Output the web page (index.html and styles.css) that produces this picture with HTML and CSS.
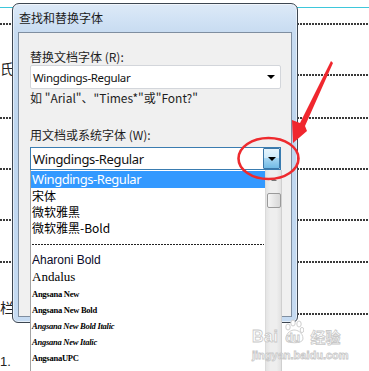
FILE: index.html
```html
<!DOCTYPE html>
<html lang="zh-CN">
<head>
<meta charset="utf-8">
<title>查找和替换字体</title>
<link rel="stylesheet" href="styles.css">
</head>
<body>
<div class="screen">
  <div class="doc">
    <div class="cyan"></div>
    <div class="row r1"><span class="leader"></span></div>
    <div class="row r2"><span class="frag">氏</span><span class="leader"></span></div>
    <div class="row r3"><span class="leader"></span></div>
    <div class="row r4"><span class="leader"></span></div>
    <div class="row r5"><span class="leader"></span></div>
    <div class="row r6"><span class="leader"></span></div>
    <div class="row r7"><span class="frag">栏</span><span class="leader"></span></div>
    <div class="row r8"><span class="frag num">1.</span></div>
  </div>

  <div class="dialog">
    <div class="titlebar">查找和替换字体</div>
    <div class="client">
      <div class="label">替换文档字体 (R):</div>
      <div class="input">
        <span class="value">Wingdings-Regular</span>
        <span class="caret"></span>
      </div>
      <div class="hint">如 "Arial"、"Times*"或"Font?"</div>
      <div class="label label2">用文档或系统字体 (W):</div>
      <div class="combo">
        <span class="value big">Wingdings-Regular</span>
        <span class="combo-btn"><span class="caret"></span></span>
      </div>
    </div>
  </div>

  <div class="dropdown">
    <ul class="list">
      <li class="item sel">Wingdings-Regular</li>
      <li class="item cjk">宋体</li>
      <li class="item cjk">微软雅黑</li>
      <li class="item cjk">微软雅黑-Bold</li>
      <li class="item sep"></li>
      <li class="item aharoni">Aharoni Bold</li>
      <li class="item andalus">Andalus</li>
      <li class="item ang">Angsana New</li>
      <li class="item ang">Angsana New Bold</li>
      <li class="item ang it">Angsana New Bold Italic</li>
      <li class="item ang it">Angsana New Italic</li>
      <li class="item ang">AngsanaUPC</li>
    </ul>
    <div class="scrollbar">
      <span class="sb-up"></span>
      <span class="sb-thumb"></span>
    </div>
  </div>

  <div class="watermark">
    <div class="wm-top">
      <span class="wm-bai">Bai</span>
      <span class="wm-paw">
        <svg width="20" height="26" viewBox="0 0 20 26">
          <g fill="#fff" stroke="#cfcfcf" stroke-width="1">
            <ellipse cx="4" cy="8" rx="2.2" ry="3"/>
            <ellipse cx="9" cy="4" rx="2.2" ry="3"/>
            <ellipse cx="15" cy="5" rx="2.2" ry="3"/>
            <ellipse cx="18" cy="11" rx="1.8" ry="2.6"/>
            <path d="M2 20 C2 13 8 11 10 11 C13 11 19 13 19 20 C19 25 2 25 2 20 Z"/>
          </g>
        </svg>
        <span class="wm-du">du</span>
      </span>
      <span class="wm-jy">经验</span>
    </div>
    <div class="wm-url">jingyan.baidu.com</div>
  </div>

  <svg class="annot" width="369" height="371" viewBox="0 0 369 371">
    <ellipse cx="268.5" cy="158.5" rx="30" ry="20.5" fill="none" stroke="#ee2a2e" stroke-width="2.6"/>
    <polygon points="331,61 333,63 305,126 307,131 293,143 292,120 300,123" fill="#f0272e"/>
  </svg>
</div>
</body>
</html>
```

FILE: styles.css
```css
* { box-sizing: border-box; }

body {
  margin: 0;
  background: #fff;
  font-family: "Noto Sans CJK SC", sans-serif;
}

.screen {
  position: relative;
  width: 369px;
  height: 371px;
  overflow: hidden;
  background: #fff;
}

/* underlying document */
.doc {
  display: flex;
  flex-direction: column;
}

.cyan {
  height: 8px;
  border-bottom: 1px solid #3ec7db;
}

.row {
  display: flex;
  align-items: flex-end;
  font-family: "Noto Sans CJK SC", sans-serif;
  font-size: 14px;
  line-height: 16px;
  color: #222;
}

.leader {
  flex: 1;
  height: 2px;
  background: repeating-linear-gradient(90deg, #3a3a3a 0 2px, transparent 2px 3px);
}

.frag { padding-right: 1px; }
.num { font-family: "Liberation Sans", sans-serif; font-size: 13px; }

.r1 { height: 17px; }
.r2 { height: 51px; }
.r3 { height: 43px; }
.r4 { height: 51px; }
.r5 { height: 51px; }
.r6 { height: 42px; }
.r7 { height: 52px; }
.r8 { height: 55px; }

/* dialog window */
.dialog {
  position: absolute;
  left: 12px;
  top: 3px;
  width: 286px;
  height: 320px;
  display: flex;
  flex-direction: column;
  padding: 0 5px 5px 5px;
  border: 1px solid #3d4651;
  border-radius: 7px 7px 6px 6px;
  background: linear-gradient(180deg, #dde9f7 0, #d2e3f5 14px, #c8dcf1 28px, #bed6ef 120px, #c6dbf2 100%);
  box-shadow: inset 0 0 0 1px rgba(255,255,255,0.55);
}

.titlebar {
  height: 28px;
  flex: none;
  padding-left: 1px;
  font-size: 12px;
  line-height: 28px;
  color: #1b1b1b;
}

.client {
  flex: 1;
  background: #f0f0f0;
  border: 1px solid #7f8ea0;
  padding: 16px 10px 0 11px;
  display: flex;
  flex-direction: column;
}

.label {
  font-size: 12px;
  line-height: 16px;
  color: #1e1e1e;
}

.label2 { margin-top: 21px; }

.input {
  height: 24px;
  display: flex;
  align-items: center;
  padding: 0 5px 0 2px;
  background: #fff;
  border: 1px solid #d3d6db;
  border-radius: 2px;
}

.value {
  font-family: "Noto Sans", sans-serif;
  font-size: 11.5px;
  color: #111;
  letter-spacing: -0.35px;
}

.value.big {
  font-size: 13px;
  letter-spacing: -0.35px;
}

.caret {
  margin-left: auto;
  width: 0;
  height: 0;
  border-left: 4px solid transparent;
  border-right: 4px solid transparent;
  border-top: 4px solid #000;
}

.hint {
  margin-top: 1px;
  font-size: 12px;
  line-height: 16px;
  color: #1e1e1e;
}

.combo {
  margin-top: 4px;
  height: 23px;
  display: flex;
  align-items: center;
  padding-left: 2px;
  background: #fff;
  border: 1px solid #3a7cb0;
}

.combo-btn {
  margin-left: auto;
  width: 17px;
  height: 21px;
  display: flex;
  align-items: center;
  justify-content: center;
  border: 1px solid #3b77a8;
  border-radius: 1px;
  background: linear-gradient(180deg, #e6f4fc 0, #d0ebfa 45%, #a6d6f2 50%, #71bbe6 100%);
}

.combo-btn .caret { margin: 0; }

/* dropdown list */
.dropdown {
  position: absolute;
  left: 30px;
  top: 170px;
  width: 252px;
  height: 210px;
  display: flex;
  background: #fff;
  border-left: 1px solid #a3a3a3;
}

.list {
  flex: 1;
  margin: 0;
  padding: 1px 0 0 0;
  list-style: none;
}

.item {
  height: 16px;
  line-height: 16px;
  padding-left: 1px;
  white-space: nowrap;
  color: #000;
  font-family: "Liberation Sans", sans-serif;
  font-size: 12px;
}

.sel {
  height: 17px;
  line-height: 17px;
  background: #3399ff;
  color: #fff;
  font-family: "Noto Sans", sans-serif;
  font-size: 13px;
  letter-spacing: -0.45px;
}

.cjk {
  font-family: "Noto Sans CJK SC", sans-serif;
  font-size: 12px;
}

.sep {
  display: flex;
  align-items: center;
  padding: 0 0 0 1px;
}

.sep::after {
  content: "";
  flex: 1;
  height: 1px;
  margin-right: 1px;
  background: repeating-linear-gradient(90deg, #222 0 2px, transparent 2px 3px);
}

.aharoni {
  font-size: 12px;
  color: #0a0a2a;
}

.andalus {
  height: 18px;
  line-height: 18px;
  font-family: "Liberation Serif", serif;
  font-size: 13px;
}

.ang {
  font-family: "Liberation Serif", serif;
  font-size: 8.5px;
  font-weight: bold;
  letter-spacing: -0.25px;
}

.it { font-style: italic; }

.scrollbar {
  width: 17px;
  flex: none;
  display: flex;
  flex-direction: column;
  align-items: center;
  background: linear-gradient(90deg, #e4e4e4 0, #eeeeee 30%, #eeeeee 70%, #e2e2e2 100%);
  border-left: 1px solid #dadada;
  border-right: 1px solid #cfcfcf;
}

.sb-up {
  height: 18px;
  display: flex;
  align-items: center;
  justify-content: center;
}

.sb-up::after {
  content: "";
  width: 0;
  height: 0;
  border-left: 3px solid transparent;
  border-right: 3px solid transparent;
  border-bottom: 3px solid #777;
}

.sb-thumb {
  margin-top: 5px;
  width: 14px;
  height: 15px;
  border: 1px solid #9a9a9a;
  border-radius: 2px;
  background: linear-gradient(90deg, #f6f6f6, #e6e6e6 50%, #d8d8d8);
}

/* watermark */
.watermark {
  position: absolute;
  left: 252px;
  top: 319px;
  display: flex;
  flex-direction: column;
  color: #fff;
  -webkit-text-stroke: 0.8px #c8c8c8;
  font-family: "Liberation Sans", sans-serif;
  font-weight: bold;
}

.wm-top {
  display: flex;
  align-items: flex-end;
  height: 27px;
}

.wm-bai {
  font-size: 16px;
  line-height: 18px;
  letter-spacing: 0.5px;
}

.wm-paw {
  position: relative;
  width: 22px;
  height: 27px;
  margin-left: 6px;
}

.wm-paw svg { display: block; }

.wm-du {
  position: absolute;
  left: 1px;
  top: 12px;
  font-size: 12px;
  line-height: 14px;
}

.wm-jy {
  margin-left: 4px;
  font-family: "Noto Sans CJK SC", sans-serif;
  font-size: 15px;
  line-height: 18px;
}

.wm-url {
  margin-top: 3px;
  font-size: 11px;
  line-height: 12px;
}

/* red annotations */
.annot {
  position: absolute;
  left: 0;
  top: 0;
  pointer-events: none;
}
```
